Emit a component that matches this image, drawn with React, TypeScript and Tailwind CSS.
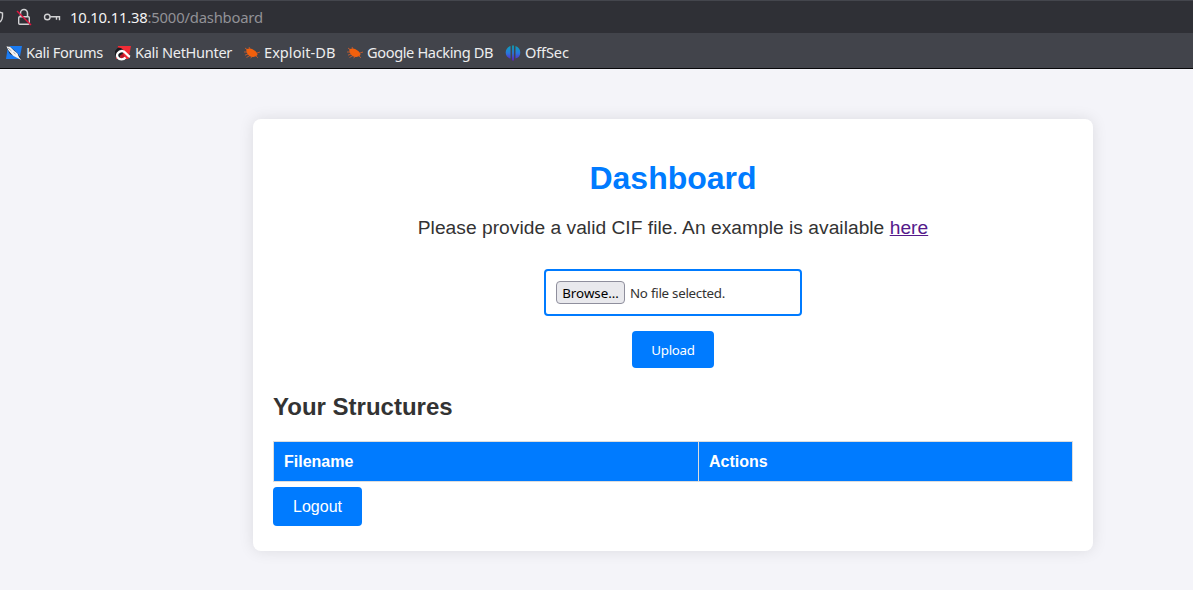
import type { ReactNode } from 'react';

function ForumsIcon() {
  return (
    <svg width="16" height="16" viewBox="0 0 16 16" className="shrink-0">
      <path d="M2 1h14l-2.500 13H0z" fill="#1a7bf2" />
      <path d="M0 1 3 1l5 4 4 4 4 6-6-3.500L4 9z" fill="#17181c" />
      <path d="M.3 1.200 4 1.800l4.500 4.200 3 2.500L13 12l2.700 3.200L11 12.800 7.500 11 5 8.500 2.500 5.500z" fill="#f4f4f4" />
      <path d="m2 3 3.500 3m2 1.500 2 1.500" stroke="#555" strokeWidth=".5" />
    </svg>
  );
}

function NetHunterIcon() {
  return (
    <svg width="16" height="16" viewBox="0 0 16 16" className="shrink-0">
      <path d="M3 1h13l-2.500 13H1z" fill="#f12c36" />
      <path d="M0 6 3 2.500l3 .5 3 2.500-2 5H5l1 4-3-.5-3-4z" fill="#1b1b20" />
      <path d="M6 9.500h3l.5 2.500L8 14H5z" fill="#b81528" />
      <path d="M10.500 12.500C8.500 15 4.500 15 2.800 12.500 .8 9.500 3.500 6 7 6c3.500 0 4.500 4.500 8 5.800" fill="none" stroke="#fff" strokeWidth="2.300" />
    </svg>
  );
}

function BugIcon() {
  return (
    <svg width="16" height="16" viewBox="0 0 16 16" className="shrink-0">
      <path d="M2.200 4.500C4.500 2.700 8 3.200 10.500 5.400c1.500.9 2.700 2.200 3 4.100-.5 1.500-1.800 1.900-3.300 2.300C7.200 12.600 4 10.800 2.700 7.500z" fill="#f2600c" />
      <path d="M3 4.500 1 3M6 4 5 2M3.500 7H0M4 9 1 10.200M6 10.500l-3.500 2M8.500 11.500 6.500 13M12.500 8.200 16 7M11.500 10.500l2.500 2.300" stroke="#d9602a" strokeWidth=".8" />
    </svg>
  );
}

function OffSecIcon() {
  return (
    <svg width="16" height="16" viewBox="0 0 16 16" className="shrink-0">
      <defs>
        <linearGradient id="offsec" x1="0" y1="0" x2="0" y2="16" gradientUnits="userSpaceOnUse">
          <stop offset="0" stopColor="#08a6b4" />
          <stop offset=".5" stopColor="#2878dc" />
          <stop offset="1" stopColor="#6416cb" />
        </linearGradient>
      </defs>
      <path d="M5.500 1v12.500C2.500 13 .7 10.500.7 7.500S2.500 2 5.500 1zM7.100.5h1.800v15H7.100zM10.500 1c3 1 4.800 3.500 4.800 6.500s-1.800 5.500-4.800 6z" fill="url(#offsec)" />
    </svg>
  );
}

function Bookmark({ icon, label, width }: { icon: ReactNode; label: string; width: string }) {
  return (
    <div className="flex items-center gap-1">
      {icon}
      <span className={`whitespace-nowrap ${width}`}>{label}</span>
    </div>
  );
}

function BrowserChrome() {
  return (
    <header className="font-['Noto_Sans',sans-serif]">
      <div className="flex h-[33px] items-center border-t border-[#44464d] bg-[#2f3036] text-[14.8px] tracking-[-0.19px] text-[#f4f4f4]">
        <svg width="70" height="32" viewBox="0 0 70 32" fill="none" stroke="#d2d2d4" className="shrink-0">
          <path d="M-3 10.500 2.500 12v3c0 3-1.500 5.500-4 7" strokeWidth="1.400" />
          <rect x="18.700" y="15.700" width="10.600" height="7.600" rx="1" strokeWidth="1.400" />
          <path d="M20.500 15.500V12a3.500 3.500 0 0 1 7 0v3.500" strokeWidth="1.500" />
          <path d="m17 10 14 14" stroke="#e3143f" strokeWidth="1.400" />
          <circle cx="47.300" cy="16" r="2.800" strokeWidth="1.400" />
          <path d="M50.200 15.700h9.300v3.500M56.500 15.700v3" strokeWidth="1.400" />
        </svg>
        <span className="whitespace-nowrap">10.10.11.38<span className="text-[#929297]">:5000/dashboard</span></span>
      </div>
      <nav className="flex h-9 items-center gap-3 border-b border-[#08080a] bg-[#42444b] pl-1.5 pt-[5px] text-[14.6px] text-[#ededee]">
        <Bookmark icon={<ForumsIcon />} label="Kali Forums" width="w-[77px] tracking-[-0.34px]" />
        <Bookmark icon={<NetHunterIcon />} label="Kali NetHunter" width="w-[97px] tracking-[-0.32px]" />
        <Bookmark icon={<BugIcon />} label="Exploit-DB" width="w-[71px] tracking-[0.02px]" />
        <Bookmark icon={<BugIcon />} label="Google Hacking DB" width="w-[126px] tracking-[-0.38px]" />
        <Bookmark icon={<OffSecIcon />} label="OffSec" width="w-11 tracking-[-0.15px]" />
      </nav>
    </header>
  );
}

export default function App() {
  return (
    <div className="h-[590px] overflow-hidden bg-[#f4f4f9] font-['Liberation_Sans',sans-serif] text-[#333]">
      <BrowserChrome />
      <main className="ml-[253px] mt-[50px] flex h-[432px] w-[840px] flex-col rounded-lg bg-white px-5 shadow-[0_0_15px_rgba(0,0,0,0.1)]">
        <h1 className="mt-[41px] text-center text-[32px] font-bold leading-[37px] text-[#007bff]">Dashboard</h1>
        <p className="mt-[19px] text-center text-[19.2px] leading-[24px] tracking-[0.027px]">
          Please provide a valid CIF file. An example is available{' '}
          <a href="#" className="text-[#551a8b] underline">here</a>
        </p>
        <form className="mt-[29px] flex flex-col items-center font-['Noto_Sans',sans-serif] text-[13.333px]" onSubmit={(e) => e.preventDefault()}>
          <div className="flex h-[47px] w-[258px] items-center rounded border-2 border-[#007bff] px-2.5">
            <button type="button" className="h-[23px] w-[69px] whitespace-nowrap rounded border border-[#8f8f9d] bg-[#e9e9ed] pt-px text-center leading-[21px] text-black">Browse…</button>
            <span className="ml-[5px] whitespace-nowrap pt-0.5 tracking-[-0.26px]">No file selected.</span>
          </div>
          <button type="submit" className="mt-[15px] h-[37px] w-[82px] rounded bg-[#007bff] pt-0.5 tracking-[-0.3px] text-white">Upload</button>
        </form>
        <h2 className="mt-[25px] text-2xl font-bold leading-[28px]">Your Structures</h2>
        <table className="mt-5 h-[41px] w-[800px] table-fixed border-collapse text-left text-base leading-[18px] text-white">
          <thead>
            <tr className="bg-[#007bff]">
              <th className="w-[425px] border border-[#ddd] px-2.5 pb-0 pt-px">Filename</th>
              <th className="border border-[#ddd] px-2.5 pb-0 pt-px">Actions</th>
            </tr>
          </thead>
        </table>
        <a href="#" className="mt-[5px] flex h-[39px] w-[89px] items-center justify-center rounded bg-[#007bff] text-base text-white">Logout</a>
      </main>
    </div>
  );
}
